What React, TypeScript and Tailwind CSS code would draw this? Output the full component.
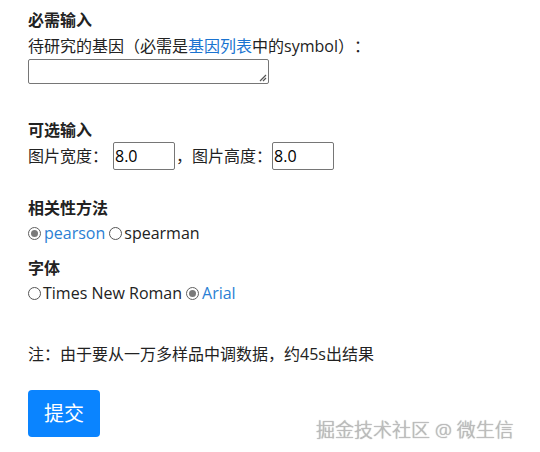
const Radio = ({ checked, label }: { checked?: boolean; label: string }) => (
  <label className="inline-flex items-center">
    <span
      className={
        checked
          ? "w-[13px] h-[13px] rounded-full border-[1.5px] border-[#5f5f5f] bg-white flex items-center justify-center"
          : "w-[13px] h-[13px] rounded-full border border-[#555] bg-white"
      }
    >
      {checked && <span className="w-[7px] h-[7px] rounded-full bg-[#7a7a7a]" />}
    </span>
    <span className={checked ? "ml-[3px] text-[#2b7fd4]" : "ml-[2px]"}>{label}</span>
  </label>
);

const NumInput = ({ value }: { value: string }) => (
  <div className="w-[62px] h-[28px] border border-[#767676] rounded-[2px] flex items-center pl-[1px] text-[16px] text-black">
    {value}
  </div>
);

export default function App() {
  return (
    <div
      className="relative w-[540px] h-[452px] bg-white text-[#222] overflow-hidden text-[16px] [text-spacing-trim:space-all]"
      style={{ fontFamily: '"Open Sans", "Noto Sans CJK SC", sans-serif' }}
    >
      <div className="pl-[28px] pt-[8px]">
        <div className="h-[24px] leading-[24px] font-bold">必需输入</div>
        <div className="h-[24px] leading-[24px] mt-[2px] whitespace-nowrap">
          待研究的基因（必需是<span className="text-[#1a73d0]">基因列表</span>中的symbol）：
        </div>
        <div className="relative mt-[1px] w-[241px] h-[25px] border border-[#767676] rounded-[2px]">
          <svg className="absolute right-[1px] bottom-[1px]" width="9" height="9" viewBox="0 0 9 9">
            <path d="M8 2 L2 8 M8 5 L5 8" stroke="#555" strokeWidth="1.2" />
          </svg>
        </div>

        <div className="mt-[34px] h-[24px] leading-[24px] font-bold">可选输入</div>
        <div className="flex items-center h-[28px] whitespace-nowrap">
          <span>图片宽度：</span>
          <span className="ml-[5px]">
            <NumInput value="8.0" />
          </span>
          <span className="ml-[1px]">，</span>
          <span>图片高度：</span>
          <NumInput value="8.0" />
        </div>

        <div className="mt-[26px] h-[24px] leading-[24px] font-bold">相关性方法</div>
        <div className="mt-[1px] h-[24px] leading-[24px] flex items-center gap-[4px]">
          <Radio checked label="pearson" />
          <Radio label="spearman" />
        </div>

        <div className="mt-[11px] h-[24px] leading-[24px] font-bold">字体</div>
        <div className="mt-[1px] h-[24px] leading-[24px] flex items-center gap-[4px]">
          <Radio label="Times New Roman" />
          <Radio checked label="Arial" />
        </div>

        <div className="mt-[37px] h-[24px] leading-[24px] whitespace-nowrap">
          注：由于要从一万多样品中调数据，约45s出结果
        </div>

        <button className="mt-[24px] w-[72px] h-[47px] rounded-[4px] bg-[#0a84ff] text-white text-[20px]">
          提交
        </button>
      </div>

      <div
        className="absolute left-[316px] top-[416px] text-[19px] font-light text-[#bdbdbd] whitespace-nowrap"
        style={{ textShadow: "0 0 1px #8a8a8a" }}
      >
        掘金技术社区 @ 微生信
      </div>
    </div>
  );
}
